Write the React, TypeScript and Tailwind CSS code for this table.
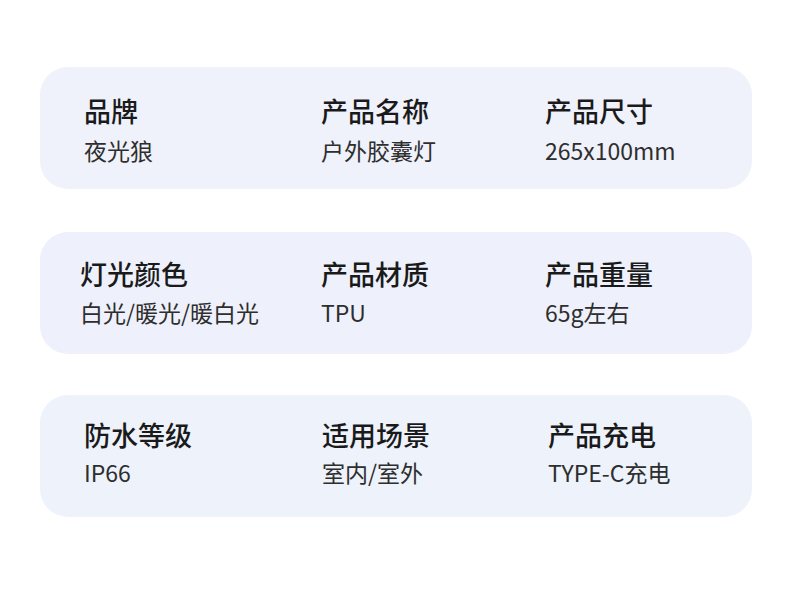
import React from "react";

type Item = { label: string; value: string };

const rows: {
  items: Item[];
  bg: string;
  pl: string;
  pt: string;
  mt: string;
  gapTop: string;
  cols: string;
}[] = [
  {
    items: [
      { label: "品牌", value: "夜光狼" },
      { label: "产品名称", value: "户外胶囊灯" },
      { label: "产品尺寸", value: "265x100mm" },
    ],
    bg: "bg-[#eff1fb]",
    pl: "pl-[44px]",
    pt: "pt-[27px]",
    mt: "mt-[7px]",
    gapTop: "mt-[67px]",
    cols: "grid-cols-[237px_224px_1fr]",
  },
  {
    items: [
      { label: "灯光颜色", value: "白光/暖光/暖白光" },
      { label: "产品材质", value: "TPU" },
      { label: "产品重量", value: "65g左右" },
    ],
    bg: "bg-[#eef1fb]",
    pl: "pl-[40px]",
    pt: "pt-[25px]",
    mt: "mt-[6px]",
    gapTop: "mt-[43px]",
    cols: "grid-cols-[241px_224px_1fr]",
  },
  {
    items: [
      { label: "防水等级", value: "IP66" },
      { label: "适用场景", value: "室内/室外" },
      { label: "产品充电", value: "TYPE-C充电" },
    ],
    bg: "bg-[#edf2fb]",
    pl: "pl-[44px]",
    pt: "pt-[23px]",
    mt: "mt-[5px]",
    gapTop: "mt-[41px]",
    cols: "grid-cols-[238px_226px_1fr]",
  },
];

export default function App() {
  return (
    <div
      className="w-[790px] h-[602px] bg-white px-[40px] flex flex-col overflow-hidden"
      style={{ fontFamily: '"Noto Sans CJK SC", "Noto Sans", sans-serif' }}
    >
      {rows.map((row, i) => (
        <div
          key={i}
          className={`shrink-0 h-[122px] w-[712px] rounded-[28px] ${row.bg} ${row.pl} ${row.pt} ${row.gapTop}`}
        >
          <div className={`grid ${row.cols}`}>
            {row.items.map((it) => (
              <div key={it.label} className="flex flex-col">
                <div className="text-[27px] leading-[34px] font-medium text-[#1a1a1a]">
                  {it.label}
                </div>
                <div className={`text-[23px] leading-[30px] ${row.mt} text-[#2e2e2e]`}>
                  {it.value}
                </div>
              </div>
            ))}
          </div>
        </div>
      ))}
    </div>
  );
}
